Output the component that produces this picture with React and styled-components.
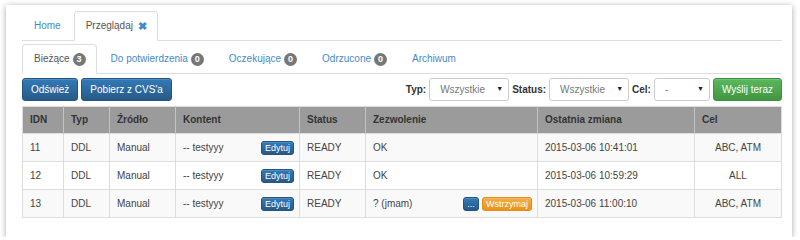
import styled, { createGlobalStyle, css } from 'styled-components';

const GlobalStyle = createGlobalStyle`
  body {
    margin: 0;
    background: #fff;
    font-family: 'Liberation Sans', Arial, sans-serif;
    font-size: 10px;
    color: #333;
  }
`;

const Panel = styled.div`
  margin: 5px 8px 0 6px;
  padding: 6px 10px 19px 16px;
  background: #fff;
  box-shadow: 0 1px 6px rgba(0, 0, 0, 0.35);
`;

const NavTabs = styled.ul`
  display: flex;
  list-style: none;
  margin: ${p => (p.$sub ? '3px 0 0' : '0')};
  padding: 0;
  border-bottom: 1px solid #ddd;
`;

const TabItem = styled.li`
  margin: 0 2px -1px 0;
`;

const TabLink = styled.a`
  display: flex;
  align-items: center;
  gap: 3px;
  padding: 7px 10px 7px 11px;
  line-height: 14px;
  border: 1px solid transparent;
  border-radius: 4px 4px 0 0;
  color: #428bca;
  text-decoration: none;
  cursor: pointer;

  ${p =>
    p.$active &&
    css`
      color: #555;
      background: #fff;
      border-color: #ddd #ddd transparent;
    `}
`;

const Close = styled.span`
  color: #428bca;
  font-size: 11px;
  font-weight: bold;
  margin-left: 2px;
`;

const Badge = styled.span`
  display: inline-block;
  min-width: 13px;
  padding: 1px 3px;
  box-sizing: border-box;
  border-radius: 7px;
  background: #777;
  color: #fff;
  font-size: 9px;
  font-weight: bold;
  line-height: 11px;
  text-align: center;
`;

const Toolbar = styled.div`
  display: flex;
  justify-content: space-between;
  align-items: center;
  margin-top: 4px;
`;

const Group = styled.div`
  display: flex;
  align-items: center;
  gap: 3px;
`;

const variants = {
  primary: css`
    background: linear-gradient(#337ab7, #265a88);
    border-color: #245580;
  `,
  success: css`
    background: linear-gradient(#5cb85c, #419641);
    border-color: #3e8f3e;
  `,
  warning: css`
    background: linear-gradient(#f0ad4e, #eb9316);
    border-color: #e38d13;
  `,
};

const Button = styled.button`
  font-family: inherit;
  font-size: ${p => (p.$xs ? '9px' : '10px')};
  line-height: ${p => (p.$xs ? '12px' : '13px')};
  padding: ${p => (p.$xs ? '0 3px' : '4px 8px')};
  min-width: ${p => (p.$xs ? '16px' : '0')};
  color: #fff;
  border: 1px solid;
  border-radius: 3px;
  box-shadow: inset 0 1px 0 rgba(255, 255, 255, 0.15);
  cursor: pointer;
  ${p => variants[p.$variant || 'primary']}
`;

const Label = styled.label`
  font-weight: bold;
  color: #333;
`;

const SelectWrap = styled.span`
  position: relative;
  display: inline-flex;
`;

const Select = styled.select`
  appearance: none;
  width: ${p => p.$w}px;
  height: 23px;
  padding: 0 0 0 10px;
  border: 1px solid #ccc;
  border-radius: 3px;
  background: #fff;
  font-family: inherit;
  font-size: 10px;
  color: #777;
`;

const Arrow = styled.span`
  position: absolute;
  right: 6px;
  top: 7px;
  font-size: 7px;
  color: #222;
  pointer-events: none;
`;

const Table = styled.table`
  width: 100%;
  margin-top: 5px;
  border-collapse: collapse;
  border: 1px solid #ddd;
`;

const Th = styled.th`
  background: #9b9b9b;
  color: #333;
  font-weight: bold;
  text-align: left;
  padding: 6px 7px;
  line-height: 14px;
  border-left: 1px solid #c4c4c4;
  &:first-child { border-left: none; }
`;

const Row = styled.tr`
  background: ${p => (p.$striped ? '#f9f9f9' : '#fff')};
`;

const Td = styled.td`
  padding: 7px 7px 6px;
  line-height: 14px;
  border: 1px solid #ddd;
  color: #444;
  text-align: ${p => (p.$center ? 'center' : 'left')};
  ${p => p.$tight && css`padding-right: 5px;`}
`;

const CellFlex = styled.div`
  display: flex;
  justify-content: space-between;
  align-items: center;
`;

const Actions = styled.span`
  display: flex;
  gap: 3px;
`;

const columns = [
  ['IDN', 41],
  ['Typ', 46],
  ['Źródło', 66],
  ['Kontent', 124],
  ['Status', 66],
  ['Zezwolenie', 172],
  ['Ostatnia zmiana', 157],
  ['Cel', 87],
];

const rows = [
  { id: 11, typ: 'DDL', src: 'Manual', content: '-- testyyy', status: 'READY', perm: 'OK', date: '2015-03-06 10:41:01', cel: 'ABC, ATM' },
  { id: 12, typ: 'DDL', src: 'Manual', content: '-- testyyy', status: 'READY', perm: 'OK', date: '2015-03-06 10:59:29', cel: 'ALL' },
  { id: 13, typ: 'DDL', src: 'Manual', content: '-- testyyy', status: 'READY', perm: '? (jmam)', date: '2015-03-06 11:00:10', cel: 'ABC, ATM', hold: true },
];

const subTabs = [
  ['Bieżące', 3],
  ['Do potwierdzenia', 0],
  ['Oczekujące', 0],
  ['Odrzucone', 0],
  ['Archiwum', null],
];

function Filter({ label, width, value }) {
  return (
    <>
      <Label>{label}</Label>
      <SelectWrap>
        <Select $w={width} defaultValue={value}>
          <option>{value}</option>
        </Select>
        <Arrow>▼</Arrow>
      </SelectWrap>
    </>
  );
}

export default function App() {
  return (
    <>
      <GlobalStyle />
      <Panel>
        <NavTabs>
          <TabItem><TabLink>Home</TabLink></TabItem>
          <TabItem>
            <TabLink $active>Przeglądaj <Close>✖</Close></TabLink>
          </TabItem>
        </NavTabs>

        <NavTabs $sub>
          {subTabs.map(([name, count], i) => (
            <TabItem key={name}>
              <TabLink $active={i === 0}>
                {name}
                {count !== null && <Badge>{count}</Badge>}
              </TabLink>
            </TabItem>
          ))}
        </NavTabs>

        <Toolbar>
          <Group>
            <Button>Odśwież</Button>
            <Button>Pobierz z CVS'a</Button>
          </Group>
          <Group>
            <Filter label="Typ:" width={80} value="Wszystkie" />
            <Filter label="Status:" width={80} value="Wszystkie" />
            <Filter label="Cel:" width={56} value="-" />
            <Button $variant="success">Wyślij teraz</Button>
          </Group>
        </Toolbar>

        <Table>
          <colgroup>
            {columns.map(([name, w]) => <col key={name} style={{ width: w }} />)}
          </colgroup>
          <thead>
            <tr>
              {columns.map(([name]) => <Th key={name}>{name}</Th>)}
            </tr>
          </thead>
          <tbody>
            {rows.map((r, i) => (
              <Row key={r.id} $striped={i % 2 === 0}>
                <Td>{r.id}</Td>
                <Td>{r.typ}</Td>
                <Td>{r.src}</Td>
                <Td $tight>
                  <CellFlex>
                    {r.content}
                    <Button $xs>Edytuj</Button>
                  </CellFlex>
                </Td>
                <Td>{r.status}</Td>
                <Td $tight>
                  <CellFlex>
                    {r.perm}
                    {r.hold && (
                      <Actions>
                        <Button $xs>...</Button>
                        <Button $xs $variant="warning">Wstrzymaj</Button>
                      </Actions>
                    )}
                  </CellFlex>
                </Td>
                <Td>{r.date}</Td>
                <Td $center>{r.cel}</Td>
              </Row>
            ))}
          </tbody>
        </Table>
      </Panel>
    </>
  );
}
